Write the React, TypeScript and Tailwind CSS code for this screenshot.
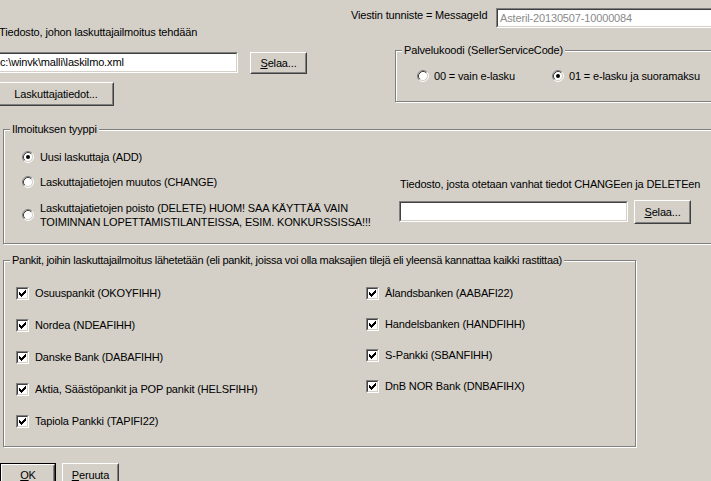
import type { ReactNode } from "react";

// Classic 3D chrome: sunken edit box, raised push button, etched group frame.

function Field({ className = "", children }: { className?: string; children?: ReactNode }) {
  return (
    <div
      className={`border border-t-[#808080] border-l-[#808080] border-b-white border-r-white ${className}`}
    >
      <div className="flex h-full items-center overflow-hidden whitespace-nowrap border border-t-[#404040] border-l-[#404040] border-b-[#d4d0c8] border-r-[#d4d0c8] bg-white px-[2px]">
        {children}
      </div>
    </div>
  );
}

function Button({
  className = "",
  isDefault = false,
  children,
}: {
  className?: string;
  isDefault?: boolean;
  children: ReactNode;
}) {
  const face = (
    <div className="h-full border border-t-white border-l-white border-b-[#404040] border-r-[#404040]">
      <div className="flex h-full items-center justify-center border border-t-[#d4d0c8] border-l-[#d4d0c8] border-b-[#808080] border-r-[#808080] whitespace-nowrap">
        {children}
      </div>
    </div>
  );
  if (isDefault) {
    return <div className={`border border-black ${className}`}>{face}</div>;
  }
  return <div className={className}>{face}</div>;
}

function Group({
  title,
  className = "",
  titleClass = "",
  children,
}: {
  title: string;
  className?: string;
  titleClass?: string;
  children: ReactNode;
}) {
  return (
    <div
      className={`relative border border-[#808080] shadow-[inset_1px_1px_0_#fff,1px_1px_0_#fff] ${className}`}
    >
      <span
        className={`absolute left-[6px] top-[-7px] whitespace-nowrap bg-[#d4d0c8] px-[2px] leading-[13px] ${titleClass}`}
      >
        {title}
      </span>
      {children}
    </div>
  );
}

function RadioDot({ checked }: { checked?: boolean }) {
  return (
    <svg width="12" height="12" viewBox="0 0 12 12" className="shrink-0">
      <circle cx="6" cy="6" r="4.5" fill="#fff" />
      <path d="M2.11 9.89A5.5 5.5 0 0 1 9.89 2.11" fill="none" stroke="#808080" />
      <path d="M9.89 2.11A5.5 5.5 0 0 1 2.11 9.89" fill="none" stroke="#fff" />
      <path d="M2.82 9.18A4.5 4.5 0 0 1 9.18 2.82" fill="none" stroke="#404040" />
      <path d="M9.18 2.82A4.5 4.5 0 0 1 2.82 9.18" fill="none" stroke="#d4d0c8" />
      {checked && <circle cx="6" cy="6" r="2" fill="#000" />}
    </svg>
  );
}

function Radio({
  checked,
  gap = "gap-[5px]",
  className = "",
  children,
}: {
  checked?: boolean;
  gap?: string;
  className?: string;
  children: ReactNode;
}) {
  return (
    <div className={`flex items-center ${gap} ${className}`}>
      <RadioDot checked={checked} />
      <div className="leading-[14px]">{children}</div>
    </div>
  );
}

function Check({ children }: { children: ReactNode }) {
  return (
    <div className="flex h-[14px] items-center gap-[6px] whitespace-nowrap">
      <div className="h-[13px] w-[13px] shrink-0 border border-t-[#808080] border-l-[#808080] border-b-white border-r-white">
        <div className="h-full w-full border border-t-[#404040] border-l-[#404040] border-b-[#d4d0c8] border-r-[#d4d0c8] bg-white">
          <svg width="9" height="9" viewBox="0 0 9 9" className="block">
            <path
              d="M1 3h1v3h-1zM2 4h1v3h-1zM3 5h1v3h-1zM4 4h1v3h-1zM5 3h1v3h-1zM6 2h1v3h-1zM7 1h1v3h-1z"
              fill="#000"
            />
          </svg>
        </div>
      </div>
      <span className="leading-[14px]">{children}</span>
    </div>
  );
}

const banksLeft = [
  "Osuuspankit (OKOYFIHH)",
  "Nordea (NDEAFIHH)",
  "Danske Bank (DABAFIHH)",
  "Aktia, Säästöpankit ja POP pankit (HELSFIHH)",
  "Tapiola Pankki (TAPIFI22)",
];

const banksRight = [
  "Ålandsbanken (AABAFI22)",
  "Handelsbanken (HANDFIHH)",
  "S-Pankki (SBANFIHH)",
  "DnB NOR Bank (DNBAFIHX)",
];

export default function App() {
  return (
    <div className="h-[481px] w-[711px] overflow-hidden bg-[#d4d0c8] font-['Liberation_Sans',Arial,sans-serif] text-[11px] leading-[13px] tracking-[-0.15px] text-black">
      {/* target file, message id, service code */}
      <div className="flex h-[129px]">
        <div className="w-[340px] shrink-0 pt-[25px]">
          <div className="-ml-[1px] leading-[14px]">Tiedosto, johon laskuttajailmoitus tehdään</div>
          <div className="mt-[13px] flex items-start">
            <Field className="-ml-[4px] h-[21px] w-[242px] shrink-0">c:\winvk\malli\laskilmo.xml</Field>
            <Button className="ml-[12px] h-[22px] w-[57px] shrink-0">
              <span>
                <span className="underline">S</span>elaa...
              </span>
            </Button>
          </div>
          <Button className="-ml-[2px] mt-[8px] h-[24px] w-[116px]">Laskuttajatiedot...</Button>
        </div>
        <div className="min-w-0 flex-1 overflow-hidden pt-[8px]">
          <div className="flex items-start">
            <div className="mt-[1px] w-[156px] shrink-0 whitespace-nowrap pl-[11px]">Viestin tunniste = MessageId</div>
            <Field className="h-[20px] w-[230px] shrink-0 text-[#8a8a8a]">Asteril-20130507-10000084</Field>
          </div>
          <Group title="Palvelukoodi (SellerServiceCode)" className="ml-[55px] mt-[22px] h-[52px] w-[360px]">
            <div className="flex pl-[21px] pt-[18px]">
              <Radio className="w-[135px]">00 = vain e-lasku</Radio>
              <Radio checked>01 = e-lasku ja suoramaksu</Radio>
            </div>
          </Group>
        </div>
      </div>

      {/* notice type */}
      <Group title="Ilmoituksen tyyppi" className="ml-[3px] h-[115px] w-[720px]">
        <div className="flex">
          <div className="w-[395px] shrink-0 pl-[18px] pt-[20px]">
            <Radio checked gap="gap-[6px]">
              Uusi laskuttaja (ADD)
            </Radio>
            <Radio gap="gap-[6px]" className="mt-[11px]">
              Laskuttajatietojen muutos (CHANGE)
            </Radio>
            <Radio gap="gap-[6px]" className="mt-[12px] whitespace-nowrap">
              Laskuttajatietojen poisto (DELETE) HUOM! SAA KÄYTTÄÄ VAIN
              <br />
              TOIMINNAN LOPETTAMISTILANTEISSA, ESIM. KONKURSSISSA!!!
            </Radio>
          </div>
          <div className="pt-[47px]">
            <div className="whitespace-nowrap pl-[1px] leading-[14px]">
              Tiedosto, josta otetaan vanhat tiedot CHANGEen ja DELETEen
            </div>
            <div className="mt-[10px] flex items-start">
              <Field className="h-[21px] w-[229px] shrink-0" />
              <Button className="-mt-[1px] ml-[6px] h-[24px] w-[57px] shrink-0">
                <span>
                  <span className="underline">S</span>elaa...
                </span>
              </Button>
            </div>
          </div>
        </div>
      </Group>

      {/* receiving banks */}
      <Group
        title="Pankit, joihin laskuttajailmoitus lähetetään (eli pankit, joissa voi olla maksajien tilejä eli yleensä kannattaa kaikki rastittaa)"
        titleClass="tracking-[-0.28px]"
        className="ml-[3px] mt-[16px] h-[187px] w-[633px]"
      >
        <div className="flex pl-[12px] pt-[25px]">
          <div className="flex w-[350px] shrink-0 flex-col gap-[18px]">
            {banksLeft.map((b) => (
              <Check key={b}>{b}</Check>
            ))}
          </div>
          <div className="flex flex-col gap-[17px]">
            {banksRight.map((b) => (
              <Check key={b}>{b}</Check>
            ))}
          </div>
        </div>
      </Group>

      <div className="mt-[16px] flex">
        <Button isDefault className="h-[24px] w-[56px] shrink-0">
          <span>
            <span className="underline">O</span>K
          </span>
        </Button>
        <Button className="ml-[6px] h-[24px] w-[57px] shrink-0">
          <span>
            <span className="underline">P</span>eruuta
          </span>
        </Button>
      </div>
    </div>
  );
}
